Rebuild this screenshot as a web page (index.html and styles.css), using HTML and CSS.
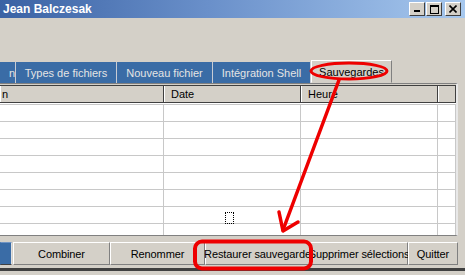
FILE: index.html
```html
<!DOCTYPE html>
<html lang="fr">
  <head>
    <meta charset="UTF-8" />
    <title>Jean Balczesak</title>
    <link rel="stylesheet" href="styles.css">
  </head>
  <body>
    <div class="window">
      <div class="titlebar">
        <span class="title">Jean Balczesak</span>
        <div class="caption-buttons">
          <span class="cap">
            <svg width="8" height="8" viewBox="0 0 8 8"><rect x="1" y="5" width="6" height="2" fill="#000"/></svg>
          </span>
          <span class="cap">
            <svg width="9" height="9" viewBox="0 0 9 9"><rect x="0.5" y="0.5" width="8" height="8" fill="none" stroke="#000"/><rect x="0" y="0" width="9" height="2" fill="#000"/></svg>
          </span>
          <span class="cap cap-close">
            <svg width="8" height="8" viewBox="0 0 8 8"><path d="M0.5 0.5 L7.5 7.5 M7.5 0.5 L0.5 7.5" stroke="#000" stroke-width="1.6"/></svg>
          </span>
        </div>
      </div>

      <div class="tabs">
        <div class="tab tab-cut">n</div>
        <div class="tab tab-types">Types de fichiers</div>
        <div class="tab tab-new">Nouveau fichier</div>
        <div class="tab tab-shell">Intégration Shell</div>
        <div class="tab tab-active">Sauvegardes</div>
      </div>

      <div class="grid">
        <div class="row head">
          <div class="cell c-name">n</div>
          <div class="cell c-date">Date</div>
          <div class="cell c-hour">Heure</div>
          <div class="cell c-rest"></div>
        </div>
        <div class="rows">
          <div class="row"><div class="cell c-name"></div><div class="cell c-date"></div><div class="cell c-hour"></div><div class="cell c-rest"></div></div>
          <div class="row"><div class="cell c-name"></div><div class="cell c-date"></div><div class="cell c-hour"></div><div class="cell c-rest"></div></div>
          <div class="row"><div class="cell c-name"></div><div class="cell c-date"></div><div class="cell c-hour"></div><div class="cell c-rest"></div></div>
          <div class="row"><div class="cell c-name"></div><div class="cell c-date"></div><div class="cell c-hour"></div><div class="cell c-rest"></div></div>
          <div class="row"><div class="cell c-name"></div><div class="cell c-date"></div><div class="cell c-hour"></div><div class="cell c-rest"></div></div>
          <div class="row"><div class="cell c-name"></div><div class="cell c-date"></div><div class="cell c-hour"></div><div class="cell c-rest"></div></div>
          <div class="row"><div class="cell c-name"></div><div class="cell c-date"><span class="focus"></span></div><div class="cell c-hour"></div><div class="cell c-rest"></div></div>
          <div class="row"><div class="cell c-name"></div><div class="cell c-date"></div><div class="cell c-hour"></div><div class="cell c-rest"></div></div>
        </div>
      </div>

      <div class="buttons">
        <div class="btn btn-cut"></div>
        <div class="btn btn-combine">Combiner</div>
        <div class="btn btn-rename">Renommer</div>
        <div class="btn btn-restore">Restaurer sauvegarde</div>
        <div class="btn btn-delete">Supprimer sélections</div>
        <div class="btn btn-quit">Quitter</div>
      </div>
      <div class="bottom-edge"></div>

      <!-- red annotations drawn over the screenshot -->
      <svg class="marks" width="465" height="275" viewBox="0 0 465 275">
        <ellipse cx="349" cy="71" rx="38" ry="8" fill="none" stroke="#ee0000" stroke-width="3"/>
        <path d="M339 80 L283 230" fill="none" stroke="#ee0000" stroke-width="3.5" stroke-linecap="round"/>
        <path d="M279 212 L283 231 L298 222" fill="none" stroke="#ee0000" stroke-width="3.5" stroke-linecap="round" stroke-linejoin="round"/>
        <rect x="195" y="241.5" width="116" height="27" rx="7" fill="none" stroke="#ee0000" stroke-width="4"/>
      </svg>
    </div>
  </body>
</html>
```

FILE: styles.css
```css
body {
  margin: 0;
  background: #d4d0c8;
  font-family: "Liberation Sans", Arial, sans-serif;
  font-size: 11px;
  color: #000;
}

.window {
  position: relative;
  width: 465px;
  height: 275px;
  overflow: hidden;
  background: #d4d0c8;
}

.titlebar {
  height: 18px;
  display: flex;
  align-items: center;
  justify-content: space-between;
  padding: 0 4px 0 3px;
  background: linear-gradient(to right, #3a62a4 0%, #6a90ca 45%, #a7c8ee 100%);
}

.title {
  color: #fff;
  font-weight: bold;
  font-size: 12px;
}

.caption-buttons {
  display: flex;
  gap: 1px;
}

.cap {
  width: 14px;
  height: 12px;
  display: flex;
  align-items: center;
  justify-content: center;
  background: #d4d0c8;
  border: 1px solid;
  border-color: #fff #404040 #404040 #fff;
}

.cap-close {
  margin-left: 2px;
}

.tabs {
  display: flex;
  height: 21px;
  margin-top: 44px;
  align-items: stretch;
}

.tab {
  display: flex;
  align-items: center;
  justify-content: center;
  background: #3a6ca6;
  color: #e4e4e4;
  border-right: 1px solid #c8ccd4;
  white-space: nowrap;
}

.tab-cut {
  width: 15px;
  justify-content: flex-end;
}

.tab-types { width: 100px; }
.tab-new { width: 95px; }
.tab-shell { width: 97px; }

.tab-active {
  width: 79px;
  margin-top: -2px;
  background: #d4d0c8;
  color: #000;
  border: 1px solid;
  border-color: #fff #808080 transparent #fff;
}

.grid {
  width: 456px;
  height: 151px;
  display: flex;
  flex-direction: column;
  border-top: 1px solid #808080;
  border-bottom: 1px solid #808080;
  border-right: 2px solid #e8e8e8;
  overflow: hidden;
}

.row {
  display: flex;
  height: 16px;
  border-top: 1px solid #c8c8c8;
  background: #fff;
  flex: none;
}

.head {
  height: 16px;
  border-top: 1px solid #404040;
  border-bottom: 1px solid #404040;
  background: #d4d0c8;
  margin-top: 1px;
}

.rows {
  flex: 1;
  overflow: hidden;
  background: #fff;
  padding-top: 1px;
}

.cell {
  flex: none;
  border-right: 1px solid #c8c8c8;
  display: flex;
  align-items: center;
  padding-left: 6px;
  box-sizing: border-box;
}

.head .cell {
  border-left: 1px solid #fff;
  border-right: 1px solid #404040;
}

.c-name { width: 164px; padding-left: 1px; }
.c-date { width: 137px; }
.c-hour { width: 137px; }
.c-rest { width: 18px; }

.focus {
  width: 7px;
  height: 10px;
  margin-left: 55px;
  margin-top: 6px;
  border: 1px dotted #000;
}

.buttons {
  display: flex;
  height: 23px;
  margin-top: 6px;
}

.btn {
  display: flex;
  align-items: center;
  justify-content: center;
  white-space: nowrap;
  background: #d4d0c8;
  border: 1px solid;
  border-color: #fff #808080 #808080 #fff;
  box-sizing: border-box;
  letter-spacing: -0.1px;
}

.btn-cut {
  width: 12px;
  margin-right: 1px;
  background: #3a6ca6;
  border-color: #6f94c4 #e0e0e0 #404040 #3a6ca6;
}

.btn-combine { width: 97px; }
.btn-rename { width: 95px; }
.btn-restore { width: 105px; }
.btn-delete { width: 98px; }
.btn-quit { width: 50px; }

.bottom-edge {
  height: 3px;
  margin-top: 3px;
  background: #404040;
}

.marks {
  position: absolute;
  top: 0;
  left: 0;
  pointer-events: none;
}
```
